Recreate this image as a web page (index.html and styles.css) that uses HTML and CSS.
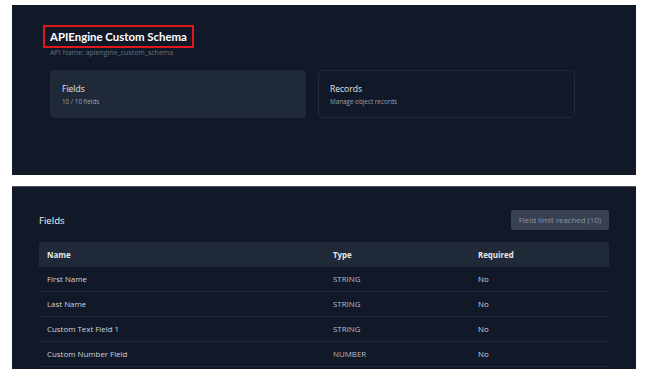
FILE: index.html
```html
<!DOCTYPE html>
<html lang="en">
<head>
    <meta charset="UTF-8">
    <meta name="viewport" content="width=device-width, initial-scale=1.0">
    <title>APIEngine Custom Schema</title>
    <link rel="stylesheet" href="styles.css">
</head>
<body>
    <!-- Object overview -->
    <section class="panel overview">
        <div class="object-head">
            <h1 class="object-title"><span class="highlight">APIEngine Custom Schema</span></h1>
            <p class="object-api">API Name: apiengine_custom_schema</p>
        </div>
        <div class="tab-cards">
            <div class="tab-card active">
                <h2>Fields</h2>
                <p>10 / 10 fields</p>
            </div>
            <div class="tab-card">
                <h2>Records</h2>
                <p>Manage object records</p>
            </div>
        </div>
    </section>

    <!-- Fields list -->
    <section class="panel fields">
        <div class="fields-head">
            <h2>Fields</h2>
            <button class="limit-btn" disabled>Field limit reached (10)</button>
        </div>
        <table class="fields-table">
            <thead>
                <tr>
                    <th class="col-name">Name</th>
                    <th class="col-type">Type</th>
                    <th>Required</th>
                </tr>
            </thead>
            <tbody>
                <tr><td>First Name</td><td class="type">STRING</td><td>No</td></tr>
                <tr><td>Last Name</td><td class="type">STRING</td><td>No</td></tr>
                <tr><td>Custom Text Field 1</td><td class="type">STRING</td><td>No</td></tr>
                <tr><td>Custom Number Field</td><td class="type">NUMBER</td><td>No</td></tr>
            </tbody>
        </table>
    </section>
</body>
</html>
```

FILE: styles.css
```css
/* General styles */
body {
    margin: 0;
    padding: 5px 11px 0 12px;
    background-color: #ffffff;
    font-family: "Open Sans", "Noto Sans", sans-serif;
    color: #e5e7eb;
}

.panel {
    background-color: #111827;
    box-sizing: border-box;
}

/* Overview panel */
.overview {
    height: 170px;
    padding: 20px 61px 0 38px;
}

.object-title {
    margin: 0;
    font-family: Lato, "Open Sans", sans-serif;
    font-size: 11.4px;
    font-weight: 700;
    line-height: 17px;
    color: #ffffff;
}

.highlight {
    display: inline-block;
    padding: 1px 5px;
    border: 2px solid #e0181c;
    margin-left: -7px;
}

.object-api {
    margin: 0;
    font-size: 7px;
    line-height: 10px;
    color: #6b7280;
}

.tab-cards {
    display: grid;
    grid-template-columns: 256px 257px;
    gap: 12px;
    margin-top: 12px;
}

.tab-card {
    height: 48px;
    box-sizing: border-box;
    padding: 12px 11px;
    border: 1px solid #1f2937;
    border-radius: 4px;
}

.tab-card.active {
    background-color: #1f2937;
}

.tab-card h2 {
    margin: 0;
    font-size: 8.5px;
    font-weight: 400;
    line-height: 12px;
    color: #e5e7eb;
}

.tab-card p {
    margin: 2px 0 0;
    font-size: 6.3px;
    line-height: 9px;
    color: #9ca3af;
}

/* Fields panel */
.fields {
    margin-top: 11px;
    height: 183px;
    padding: 23px 27px 0;
    border-top: 1px solid #4b5563;
    overflow: hidden;
}

.fields-head {
    display: flex;
    justify-content: space-between;
    align-items: center;
}

.fields-head h2 {
    margin: 0;
    font-size: 9.6px;
    font-weight: 400;
    color: #f3f4f6;
}

.limit-btn {
    height: 20px;
    padding: 0 8px;
    border: none;
    border-radius: 2px;
    background-color: #374151;
    color: #8b95a5;
    font-family: inherit;
    font-size: 7.8px;
}

.fields-table {
    width: 100%;
    margin-top: 12px;
    border-collapse: collapse;
    font-size: 7.9px;
}

.fields-table th,
.fields-table td {
    padding: 0 8px;
    text-align: left;
}

.fields-table th {
    height: 25px;
    background-color: #1f2937;
    font-weight: 700;
    color: #e5e7eb;
}

.fields-table td {
    height: 24px;
    border-bottom: 1px solid #1f2937;
    color: #d1d5db;
}

.fields-table .type {
    color: #b8bec8;
}

.col-name {
    width: 270px;
}

.col-type {
    width: 129px;
}
```
